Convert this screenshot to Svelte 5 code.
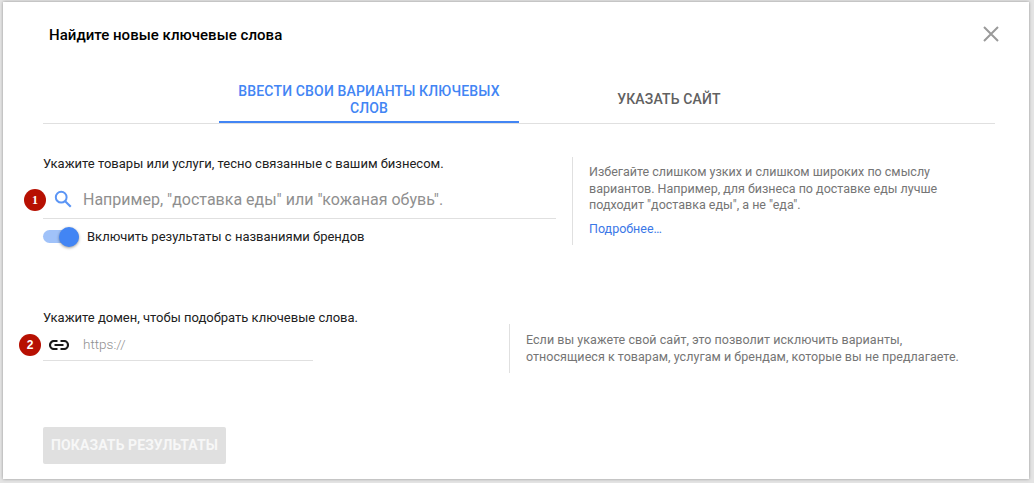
<script lang="ts">
  let tab = $state(0);
  const tabs = ["Ввести свои варианты ключевых слов", "Указать сайт"];
</script>

<div class="page">
  <div class="dialog">
    <header class="head">
      <h1>Найдите новые ключевые слова</h1>
      <svg class="close" viewBox="0 0 16 16" width="16" height="16">
        <path d="M1 1L15 15M15 1L1 15" stroke="#9a9a9a" stroke-width="2" fill="none" />
      </svg>
    </header>

    <div class="tabs">
      {#each tabs as t, i}
        <button class="tab" class:active={tab === i} onclick={() => (tab = i)}>{t}</button>
      {/each}
    </div>

    <section class="row first">
      <div class="main wide">
        <p class="label">Укажите товары или услуги, тесно связанные с вашим бизнесом.</p>
        <div class="field big">
          <span class="badge one">1</span>
          <svg class="icon" viewBox="0 0 20 20" width="18" height="18">
            <circle cx="8" cy="8" r="6" stroke="#5b95f5" stroke-width="2.2" fill="none" />
            <path d="M12.4 12.4L18.6 18.6" stroke="#5b95f5" stroke-width="2.4" fill="none" />
          </svg>
          <span class="placeholder">Например, "доставка еды" или "кожаная обувь".</span>
        </div>
        <div class="switch-row">
          <span class="switch"><span class="knob"></span></span>
          <span class="switch-text">Включить результаты с названиями брендов</span>
        </div>
      </div>
      <aside class="hint first-hint">
        <p>Избегайте слишком узких и слишком широких по смыслу вариантов. Например, для бизнеса по доставке еды лучше подходит "доставка еды", а не "еда".</p>
        <a href="#more">Подробнее…</a>
      </aside>
    </section>

    <section class="row second">
      <div class="main narrow">
        <p class="label">Укажите домен, чтобы подобрать ключевые слова.</p>
        <div class="field small">
          <span class="badge two">2</span>
          <svg class="icon link" viewBox="0 0 20 10" width="20" height="10">
            <path d="M8.5 1H5a4 4 0 0 0 0 8h3.5M11.5 1H15a4 4 0 0 1 0 8h-3.5M5.5 5h9" stroke="#1a1a1a" stroke-width="2.2" fill="none" />
          </svg>
          <span class="placeholder">https://</span>
        </div>
      </div>
      <aside class="hint second-hint">
        <p>Если вы укажете свой сайт, это позволит исключить варианты, относящиеся к товарам, услугам и брендам, которые вы не предлагаете.</p>
      </aside>
    </section>

    <button class="submit" disabled>Показать результаты</button>
  </div>
</div>

<style>
  :global(body) { margin: 0; background: #fff; }
  .page {
    width: 1034px;
    height: 483px;
    box-sizing: border-box;
    padding: 2px 5px 4px 3px;
    background: #e4e4e4;
    font-family: Roboto, "Noto Sans", sans-serif;
    overflow: hidden;
  }
  .dialog {
    height: 100%;
    box-sizing: border-box;
    padding: 0 34px 0 40px;
    background: #fff;
    box-shadow: 0 0 3px rgba(0, 0, 0, 0.35);
  }
  .head {
    display: flex;
    justify-content: space-between;
    align-items: center;
    box-sizing: border-box;
    height: 64px;
    padding: 1px 0 0 6px;
  }
  h1 {
    margin: 0;
    font: 500 15px/20px Roboto, sans-serif;
    letter-spacing: 0.03px;
    color: #000;
  }
  .close { margin-right: -4px; margin-top: -1px; }
  .tabs {
    display: flex;
    justify-content: center;
    box-sizing: border-box;
    height: 58px;
    border-bottom: 1px solid #e0e0e0;
  }
  .tab {
    width: 300px;
    height: 57px;
    padding: 12px 14px 0;
    border: 0;
    border-bottom: 2px solid transparent;
    background: none;
    font: 500 14px/17px Roboto, sans-serif;
    letter-spacing: 0.15px;
    color: #616161;
    text-transform: uppercase;
    text-align: center;
    box-sizing: border-box;
    vertical-align: top;
  }
  .tab.active { color: #4285f4; border-bottom-color: #4285f4; }
  .row { display: flex; }
  .first { margin-top: 31px; }
  .second { margin-top: 54px; }
  .main { flex: none; }
  .wide { width: 513px; }
  .narrow { width: 270px; }
  .label {
    margin: 0;
    font-size: 13px;
    line-height: 18px;
    color: #212121;
    white-space: nowrap;
  }
  .field {
    position: relative;
    display: flex;
    align-items: center;
    border-bottom: 1px solid #e0e0e0;
    box-sizing: border-box;
  }
  .field.big { height: 46px; padding: 7px 0 0 11px; }
  .field.small { height: 34px; padding-left: 6px; }
  .field .placeholder { color: #8f8f8f; }
  .big .placeholder { font-size: 16px; margin-left: 11px; }
  .small .placeholder { font-size: 13.5px; margin-left: 14px; font-weight: 300; }
  .badge {
    position: absolute;
    top: 50%;
    width: 22px;
    height: 22px;
    border-radius: 50%;
    background: #b71002;
    color: #fff;
    font: 700 12px/22px "Liberation Serif", serif;
    text-align: center;
  }
  .badge.one { left: -19px; margin-top: -6.5px; }
  .badge.two { left: -24px; margin-top: -9.5px; font-family: "Liberation Sans", sans-serif; }
  .icon { flex: none; }
  .link { margin-top: 3px; }
  .switch-row { display: flex; align-items: center; height: 36px; }
  .switch {
    position: relative;
    display: block;
    width: 36px;
    height: 13px;
    margin-top: -1px;
    border-radius: 7px;
    background: #a0c2f9;
  }
  .knob {
    position: absolute;
    right: 0;
    top: -3.5px;
    width: 20px;
    height: 20px;
    border-radius: 50%;
    background: #4285f4;
    box-shadow: 0 1px 3px rgba(0, 0, 0, 0.4);
  }
  .switch-text { margin: -1px 0 0 8px; font-size: 13px; color: #212121; }
  .hint { border-left: 1px solid #e0e0e0; box-sizing: border-box; }
  .hint p {
    margin: 0;
    font-size: 12.5px;
    line-height: 16.5px;
    color: #757575;
  }
  .first-hint { margin-left: 16px; margin-top: 2px; padding: 7px 0 0 16px; width: 385px; height: 88px; }
  .first-hint p { width: 365px; }
  .first-hint a { display: block; margin-top: 7.5px; font-size: 12.5px; line-height: 16px; color: #3b78e7; text-decoration: none; }
  .second-hint { margin-left: 196px; margin-top: 15px; padding: 8px 0 0 16px; height: 49px; width: 470px; }
  .second-hint p { width: 440px; letter-spacing: 0.04px; }
  .submit {
    display: block;
    margin: 54px 0 0 0;
    width: 183px;
    height: 37px;
    border: 0;
    border-radius: 2px;
    background: #e0e0e0;
    color: #f7f7f7;
    font: 700 14px/37px Roboto, sans-serif;
    letter-spacing: 0.1px;
    text-transform: uppercase;
    padding: 0;
  }
</style>
